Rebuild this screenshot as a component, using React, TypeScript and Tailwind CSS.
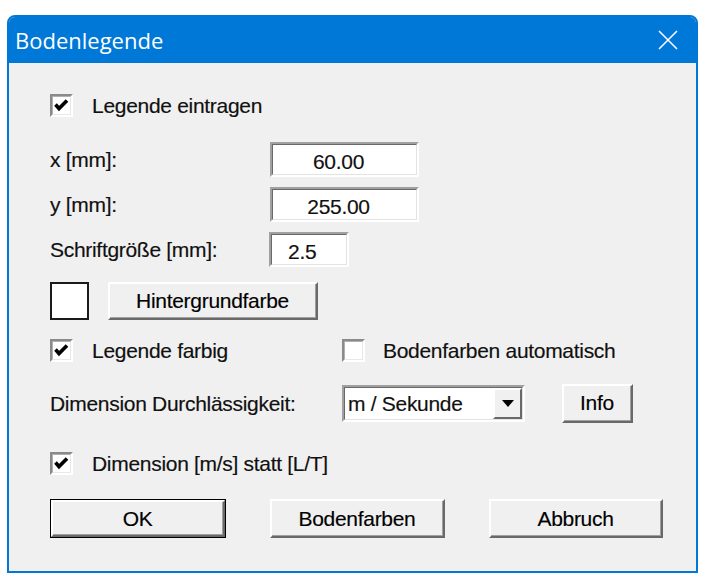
import React from "react";

const font = { fontFamily: '"Liberation Sans", Arial, sans-serif' };

function Check({ checked }: { checked: boolean }) {
  return (
    <div className="w-[23px] h-[23px] shrink-0 border-t-2 border-l-2 border-b-2 border-r-2 border-t-[#8a8a8a] border-l-[#8a8a8a] border-b-[#ffffff] border-r-[#ffffff] bg-white">
      <div className="w-full h-full border-t border-l border-b border-r border-t-[#b0b0b0] border-l-[#b0b0b0] border-b-[#e8e8e8] border-r-[#e8e8e8] flex items-center justify-center">
        {checked && (
          <svg width="17" height="17" viewBox="0 0 17 17">
            <polyline points="2.5,7.5 6,11.5 14,3.5" fill="none" stroke="#000" strokeWidth="3.6" />
          </svg>
        )}
      </div>
    </div>
  );
}

function Sunken({ className, children }: { className: string; children?: React.ReactNode }) {
  return (
    <div className={"border-t-2 border-l-2 border-b-2 border-r-2 border-t-[#a0a0a0] border-l-[#a0a0a0] border-b-[#ffffff] border-r-[#ffffff] bg-white " + className}>
      <div className="w-full h-full border-t border-l border-b border-r border-t-[#696969] border-l-[#696969] border-b-[#e3e3e3] border-r-[#e3e3e3] flex items-center">
        {children}
      </div>
    </div>
  );
}

function Raised({ className, children, def }: { className: string; children?: React.ReactNode; def?: boolean }) {
  const inner = (
    <div className="w-full h-full border-t-2 border-l-2 border-b-2 border-r-2 border-t-[#ffffff] border-l-[#ffffff] border-b-[#696969] border-r-[#696969] bg-[#f0f0f0]">
      <div className="w-full h-full border-b border-r border-b-[#a0a0a0] border-r-[#a0a0a0] flex items-center justify-center text-black">
        {children}
      </div>
    </div>
  );
  if (def) {
    return <div className={"border border-black " + className}>{inner}</div>;
  }
  return <div className={className}>{inner}</div>;
}

export default function App() {
  return (
    <div className="w-[709px] h-[583px] bg-white overflow-hidden pt-[15px] pl-[7px]" style={font}>
      <div className="w-[691px] h-[558px] border-2 border-[#0078d7] rounded-t-[8px] bg-[#f0f0f0] flex flex-col overflow-hidden">
        <div className="h-[46px] bg-[#0078d7] flex items-center justify-between pl-[6px] pr-[18px] shrink-0">
          <span className="text-white text-[22px] leading-none" style={{ fontFamily: '"Open Sans", "Noto Sans", sans-serif' }}>
            Bodenlegende
          </span>
          <svg width="20" height="20" viewBox="0 0 20 20">
            <line x1="1" y1="1" x2="19" y2="19" stroke="#fff" strokeWidth="1.6" />
            <line x1="19" y1="1" x2="1" y2="19" stroke="#fff" strokeWidth="1.6" />
          </svg>
        </div>

        <div className="flex flex-col pl-[41px] pt-[31px] text-[21px] tracking-[-0.3px] text-[#111] leading-none [-webkit-text-stroke:0.15px_#000]">
          <div className="h-[23px] flex items-center">
            <Check checked />
            <span className="ml-[19px]">Legende eintragen</span>
          </div>

          <div className="h-[35px] mt-[25px] flex items-center">
            <span className="w-[220px]">x [mm]:</span>
            <Sunken className="w-[149px] h-[35px]">
              <span className="w-full text-center pr-[12px] pt-[3px]">60.00</span>
            </Sunken>
          </div>

          <div className="h-[35px] mt-[10px] flex items-center">
            <span className="w-[220px]">y [mm]:</span>
            <Sunken className="w-[149px] h-[35px]">
              <span className="w-full text-center pr-[12px] pt-[3px]">255.00</span>
            </Sunken>
          </div>

          <div className="h-[35px] mt-[10px] flex items-center">
            <span className="w-[219px]">Schriftgröße [mm]:</span>
            <Sunken className="w-[80px] h-[35px]">
              <span className="pl-[16px] pt-[3px]">2.5</span>
            </Sunken>
          </div>

          <div className="h-[38px] mt-[15px] flex items-center">
            <div className="w-[39px] h-[38px] border-2 border-[#1a1a1a] bg-white" />
            <Raised className="w-[210px] h-[38px] ml-[19px]">Hintergrundfarbe</Raised>
          </div>

          <div className="h-[24px] mt-[18px] flex items-center">
            <div className="w-[292px] flex items-center">
              <Check checked />
              <span className="ml-[19px]">Legende farbig</span>
            </div>
            <Check checked={false} />
            <span className="ml-[18px]">Bodenfarben automatisch</span>
          </div>

          <div className="h-[40px] mt-[21px] flex items-center">
            <span className="w-[292px]">Dimension Durchlässigkeit:</span>
            <Sunken className="w-[183px] h-[37px]">
              <span className="flex-1 pl-[3px]">m / Sekunde</span>
              <div className="w-[29px] h-full border-t-2 border-l-2 border-b-2 border-r-2 border-t-[#ffffff] border-l-[#ffffff] border-b-[#696969] border-r-[#696969] bg-[#f0f0f0] flex items-center justify-center">
                <svg width="12" height="7" viewBox="0 0 12 7">
                  <polygon points="0,0 12,0 6,7" fill="#000" />
                </svg>
              </div>
            </Sunken>
            <Raised className="w-[71px] h-[39px] ml-[37px]">Info</Raised>
          </div>

          <div className="h-[23px] mt-[29px] flex items-center">
            <Check checked />
            <span className="ml-[19px]">Dimension [m/s] statt [L/T]</span>
          </div>

          <div className="h-[39px] mt-[24px] flex items-center">
            <Raised def className="w-[176px] h-[39px]">OK</Raised>
            <Raised className="w-[175px] h-[39px] ml-[44px]">Bodenfarben</Raised>
            <Raised className="w-[174px] h-[39px] ml-[44px]">Abbruch</Raised>
          </div>
        </div>
      </div>
    </div>
  );
}
